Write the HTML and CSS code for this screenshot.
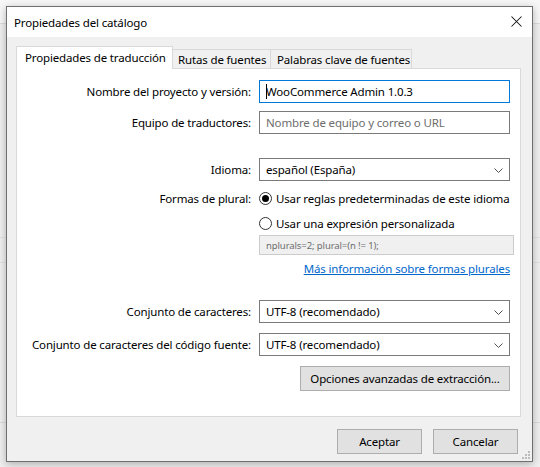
FILE: index.html
```html
<!DOCTYPE html>
<html lang="es">
<head>
<meta charset="utf-8">
<title>Propiedades del catálogo</title>
<link rel="stylesheet" href="styles.css">
</head>
<body>
<div class="dialog">
  <div class="titlebar">
    <span class="title">Propiedades del catálogo</span>
    <svg class="close" width="11" height="11" viewBox="0 0 11 11"><path d="M0.5 0.5 L10.5 10.5 M10.5 0.5 L0.5 10.5" stroke="#111" stroke-width="1.05" fill="none"/></svg>
  </div>
  <div class="content">
    <div class="tabs">
      <div class="tab active">Propiedades de traducción</div>
      <div class="tab t2">Rutas de fuentes</div>
      <div class="tab t3">Palabras clave de fuentes</div>
    </div>
    <div class="panel">
      <div class="row r-name">
        <span class="lbl">Nombre del proyecto y versión:</span>
        <div class="field focus"><span class="caret"></span>WooCommerce Admin 1.0.3</div>
      </div>
      <div class="row r-team">
        <span class="lbl">Equipo de traductores:</span>
        <div class="field placeholder">Nombre de equipo y correo o URL</div>
      </div>
      <div class="row r-lang">
        <span class="lbl">Idioma:</span>
        <div class="field select">español (España)<svg class="chev" width="9" height="5" viewBox="0 0 9 5"><path d="M0.5 0.5 L4.5 4.5 L8.5 0.5" stroke="#505050" stroke-width="1" fill="none"/></svg></div>
      </div>
      <div class="row r-radio1">
        <span class="lbl">Formas de plural:</span>
        <div class="radio"><span class="dot on"></span>Usar reglas predeterminadas de este idioma</div>
      </div>
      <div class="row r-radio2">
        <span class="lbl"></span>
        <div class="radio"><span class="dot"></span>Usar una expresión personalizada</div>
      </div>
      <div class="row r-expr">
        <span class="lbl"></span>
        <div class="expr">nplurals=2; plural=(n != 1);</div>
      </div>
      <div class="row r-link">
        <span class="lbl"></span>
        <div class="linkcell"><span class="link">Más información sobre formas plurales</span></div>
      </div>
      <div class="row r-cs">
        <span class="lbl">Conjunto de caracteres:</span>
        <div class="field select">UTF-8 (recomendado)<svg class="chev" width="9" height="5" viewBox="0 0 9 5"><path d="M0.5 0.5 L4.5 4.5 L8.5 0.5" stroke="#505050" stroke-width="1" fill="none"/></svg></div>
      </div>
      <div class="row r-src">
        <span class="lbl">Conjunto de caracteres del código fuente:</span>
        <div class="field select">UTF-8 (recomendado)<svg class="chev" width="9" height="5" viewBox="0 0 9 5"><path d="M0.5 0.5 L4.5 4.5 L8.5 0.5" stroke="#505050" stroke-width="1" fill="none"/></svg></div>
      </div>
      <div class="row r-adv">
        <span class="lbl"></span>
        <div class="advcell"><span class="btn adv">Opciones avanzadas de extracción...</span></div>
      </div>
    </div>
    <div class="footer">
      <span class="btn ok">Aceptar</span>
      <span class="btn cancel">Cancelar</span>
    </div>
    <svg class="grip" width="9" height="9" viewBox="0 0 9 9">
      <rect x="6" y="0" width="2" height="2" fill="#bcbcbc"/>
      <rect x="3" y="3" width="2" height="2" fill="#bcbcbc"/>
      <rect x="6" y="3" width="2" height="2" fill="#bcbcbc"/>
      <rect x="0" y="6" width="2" height="2" fill="#bcbcbc"/>
      <rect x="3" y="6" width="2" height="2" fill="#bcbcbc"/>
      <rect x="6" y="6" width="2" height="2" fill="#bcbcbc"/>
    </svg>
  </div>
</div>
</body>
</html>
```

FILE: styles.css
```css
html, body {
  margin: 0;
  padding: 0;
}
body {
  width: 540px;
  height: 467px;
  overflow: hidden;
  font-family: "Noto Sans", "Open Sans", sans-serif;
  font-size: 11.5px;
  letter-spacing: -0.15px;
  color: #000;
  background:
    linear-gradient(#dcdcdc, #dcdcdc) 0 23px / 100% 1px no-repeat,
    linear-gradient(#e2e2e2, #e2e2e2) 0 237px / 100% 1px no-repeat,
    linear-gradient(#e2e2e2, #e2e2e2) 0 262px / 100% 1px no-repeat,
    linear-gradient(#dcdcdc, #dcdcdc) 0 422px / 100% 1px no-repeat,
    linear-gradient(#f7f7f7, #f7f7f7) 0 0 / 100% 23px no-repeat,
    #efefef;
}
.dialog {
  margin: 6px 0 0 6px;
  width: 525px;
  height: 454px;
  border: 1px solid #6f6f6f;
  background: #f0f0f0;
  box-shadow: 0 2px 8px rgba(0, 0, 0, 0.28);
  display: flex;
  flex-direction: column;
}
.titlebar {
  height: 30px;
  background: #fff;
  display: flex;
  align-items: center;
  justify-content: space-between;
  padding: 0 10px 0 7px;
}
.title {
  white-space: nowrap;
}
.close {
  display: block;
  margin-top: -1px;
}
.content {
  flex: 1;
  position: relative;
  padding: 9px 11px 0 9px;
  display: flex;
  flex-direction: column;
}
.tabs {
  display: flex;
  align-items: flex-end;
  height: 22px;
  position: relative;
  z-index: 1;
}
.tab {
  border: 1px solid #d9d9d9;
  border-bottom: none;
  background: #f0f0f0;
  display: flex;
  align-items: center;
  box-sizing: border-box;
  height: 19px;
  padding: 0 5px;
  margin-left: -1px;
  white-space: nowrap;
  flex-shrink: 0;
}
.tab.active {
  height: 23px;
  margin-bottom: -1px;
  background: #fff;
  margin-left: 0;
  padding: 0 0 2px 8px;
  width: 157px;
}
.tab.t2 {
  width: 99px;
  padding-left: 5px;
}
.tab.t3 {
  width: 142px;
  padding-left: 6px;
}
.panel {
  height: 347px;
  border: 1px solid #d9d9d9;
  background: #fff;
  display: flex;
  flex-direction: column;
}
.row {
  display: grid;
  grid-template-columns: 234px 251px;
  column-gap: 8px;
  align-items: center;
}
.lbl {
  text-align: right;
  white-space: nowrap;
}
.field {
  box-sizing: border-box;
  height: 23px;
  border: 1px solid #7a7a7a;
  background: #fff;
  display: flex;
  align-items: center;
  padding: 0 6px;
  position: relative;
  white-space: nowrap;
}
.field.focus {
  border-color: #0078d7;
}
.caret {
  position: absolute;
  left: 6px;
  top: 3px;
  width: 1px;
  height: 15px;
  background: #000;
}
.placeholder {
  color: #6d6d6d;
}
.select .chev {
  position: absolute;
  right: 6px;
  top: 9px;
}
.radio {
  display: flex;
  align-items: center;
  height: 20px;
  white-space: nowrap;
}
.dot {
  box-sizing: border-box;
  flex-shrink: 0;
  width: 13px;
  height: 13px;
  border: 1px solid #333;
  border-radius: 50%;
  margin-right: 4px;
  position: relative;
  background: #fff;
}
.dot.on::after {
  content: "";
  position: absolute;
  left: 2px;
  top: 2px;
  width: 7px;
  height: 7px;
  border-radius: 50%;
  background: #000;
}
.expr {
  box-sizing: border-box;
  width: 255px;
  height: 20px;
  border: 1px solid #cccccc;
  background: #f0f0f0;
  color: #6d6d6d;
  font-size: 9.5px;
  letter-spacing: -0.1px;
  display: flex;
  align-items: center;
  padding: 0 6px;
  white-space: nowrap;
}
.linkcell {
  display: flex;
  justify-content: flex-end;
  height: 17px;
  align-items: center;
}
.link {
  color: #0066cc;
  text-decoration: underline;
  white-space: nowrap;
}
.advcell {
  display: flex;
  justify-content: flex-end;
}
.btn {
  box-sizing: border-box;
  height: 25px;
  border: 1px solid #adadad;
  background: #e1e1e1;
  display: flex;
  align-items: center;
  justify-content: center;
  white-space: nowrap;
}
.btn.adv {
  width: 210px;
}
.r-name { margin-top: 11px; }
.r-team { margin-top: 8px; }
.r-lang { margin-top: 24px; }
.r-radio1 { margin-top: 7px; }
.r-radio2 { margin-top: 5px; }
.r-expr { margin-top: 2px; }
.r-link { margin-top: 5px; }
.r-cs { margin-top: 23px; }
.r-src { margin-top: 10px; }
.r-adv { margin-top: 10px; }
.footer {
  display: flex;
  justify-content: flex-end;
  gap: 11px;
  margin-top: 12px;
  padding-right: 3px;
}
.btn.ok, .btn.cancel {
  width: 85px;
}
.grip {
  position: absolute;
  right: 1px;
  bottom: 1px;
}
```
